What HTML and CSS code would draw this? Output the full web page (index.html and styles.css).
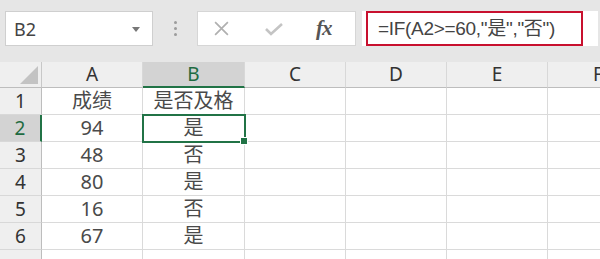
FILE: index.html
```html
<!DOCTYPE html>
<html lang="zh">
<head>
  <meta charset="UTF-8">
  <title>Sheet</title>
  <link rel="stylesheet" href="styles.css">
</head>
<body>
  <div class="toolbar">
    <div class="name-box">
      <span>B2</span>
      <svg class="caret" width="8" height="5" viewBox="0 0 8 5"><path d="M0 0h8L4 5z" fill="#777"/></svg>
    </div>
    <div class="grip"><i></i><i></i><i></i></div>
    <div class="fx-box">
      <svg width="17" height="17" viewBox="0 0 16 16"><path d="M2 2l12 12M14 2L2 14" stroke="#b0b0b0" stroke-width="1.6" fill="none"/></svg>
      <svg width="18" height="14" viewBox="0 0 18 14"><path d="M1 7l5 5L17 2" stroke="#c4c4c4" stroke-width="2.6" fill="none"/></svg>
      <span class="fx">fx</span>
    </div>
    <div class="formula">
      <div class="formula-text">=IF(A2&gt;=60,"是","否")</div>
    </div>
  </div>

  <div class="grid">
    <div class="corner"><svg width="18" height="18" viewBox="0 0 18 18"><path d="M18 0v18H0z" fill="#c3c3c3"/></svg></div>
    <div class="col-head">A</div>
    <div class="col-head active">B</div>
    <div class="col-head">C</div>
    <div class="col-head">D</div>
    <div class="col-head">E</div>
    <div class="col-head">F</div>

    <div class="row-head">1</div>
    <div class="cell">成绩</div>
    <div class="cell">是否及格</div>
    <div class="cell"></div><div class="cell"></div><div class="cell"></div><div class="cell"></div>

    <div class="row-head active">2</div>
    <div class="cell">94</div>
    <div class="cell selected">是</div>
    <div class="cell"></div><div class="cell"></div><div class="cell"></div><div class="cell"></div>

    <div class="row-head">3</div>
    <div class="cell">48</div>
    <div class="cell">否</div>
    <div class="cell"></div><div class="cell"></div><div class="cell"></div><div class="cell"></div>

    <div class="row-head">4</div>
    <div class="cell">80</div>
    <div class="cell">是</div>
    <div class="cell"></div><div class="cell"></div><div class="cell"></div><div class="cell"></div>

    <div class="row-head">5</div>
    <div class="cell">16</div>
    <div class="cell">否</div>
    <div class="cell"></div><div class="cell"></div><div class="cell"></div><div class="cell"></div>

    <div class="row-head">6</div>
    <div class="cell">67</div>
    <div class="cell">是</div>
    <div class="cell"></div><div class="cell"></div><div class="cell"></div><div class="cell"></div>

    <div class="row-head"></div>
    <div class="cell"></div><div class="cell"></div><div class="cell"></div><div class="cell"></div><div class="cell"></div><div class="cell"></div>
  </div>
</body>
</html>
```

FILE: styles.css
```css
/* Reset */
* {
  margin: 0;
  padding: 0;
  box-sizing: border-box;
}

body {
  width: 600px;
  height: 259px;
  overflow: hidden;
  background: #e6e6e6;
  font-family: 'Noto Sans', 'Noto Sans CJK SC', sans-serif;
  color: #444;
}

/* Formula bar */
.toolbar {
  display: flex;
  align-items: stretch;
  height: 62px;
  padding: 11px 0 0 5px;
}

.name-box {
  width: 148px;
  height: 35px;
  background: #fff;
  border: 1px solid #cfcfcf;
  display: flex;
  align-items: center;
  justify-content: space-between;
  padding: 0 12px 0 8px;
  font-size: 18px;
  color: #444;
}

.caret {
  margin-top: 1px;
}

.grip {
  width: 44px;
  height: 35px;
  display: flex;
  flex-direction: column;
  align-items: center;
  justify-content: center;
  gap: 3px;
}

.grip i {
  width: 3px;
  height: 3px;
  background: #9c9c9c;
  border-radius: 50%;
}

.fx-box {
  width: 159px;
  height: 35px;
  background: #fff;
  border: 1px solid #d6d6d6;
  display: flex;
  align-items: center;
  padding-left: 15px;
  gap: 35px;
}

.fx-box svg:nth-child(2) {
  margin-left: 0;
}

.fx {
  font-family: 'Liberation Serif', 'DejaVu Serif', serif;
  font-style: italic;
  font-weight: bold;
  font-size: 21px;
  color: #555;
  margin-left: -2px;
  letter-spacing: -1px;
}

.formula {
  width: 236px;
  height: 35px;
  margin-left: 6px;
  background: #fff;
  padding-left: 4px;
}

.formula-text {
  width: 217px;
  height: 35px;
  border: 2px solid #c8102e;
  font-family: 'Liberation Sans', 'Noto Sans CJK SC', sans-serif;
  font-size: 19px;
  color: #444;
  line-height: 31px;
  padding-left: 10px;
  letter-spacing: -0.3px;
  white-space: nowrap;
}

/* Sheet grid */
.grid {
  display: grid;
  grid-template-columns: 42px 101px 102px 101px 101px 101px 101px;
  grid-template-rows: 26px repeat(6, 27px) 20px;
  background: #fff;
}

.corner {
  background: #efefef;
  border-right: 1px solid #c8c8c8;
  border-bottom: 1px solid #bdbdbd;
  display: flex;
  align-items: flex-end;
  justify-content: flex-end;
  padding: 0 3px 3px 0;
}

.col-head {
  background: #efefef;
  border-right: 1px solid #d8d8d8;
  border-bottom: 1px solid #bdbdbd;
  text-align: center;
  font-size: 19px;
  line-height: 25px;
  color: #333;
}

.col-head.active {
  background: #d3d3d3;
  color: #1e6b41;
  border-bottom: 2px solid #217346;
}

.row-head {
  background: #efefef;
  border-right: 1px solid #bdbdbd;
  border-bottom: 1px solid #d8d8d8;
  text-align: center;
  font-size: 19px;
  line-height: 26px;
  color: #333;
}

.row-head.active {
  background: #d3d3d3;
  color: #1e6b41;
  border-right: 2px solid #217346;
}

.cell {
  border-right: 1px solid #dadada;
  border-bottom: 1px solid #dadada;
  text-align: center;
  font-size: 20px;
  line-height: 26px;
  color: #4a4a4a;
}

.cell.selected {
  position: relative;
  outline: 2px solid #217346;
  outline-offset: -1px;
  z-index: 1;
}

.cell.selected::after {
  content: "";
  position: absolute;
  right: -4px;
  bottom: -4px;
  width: 6px;
  height: 6px;
  background: #217346;
  border: 1px solid #fff;
}
```
